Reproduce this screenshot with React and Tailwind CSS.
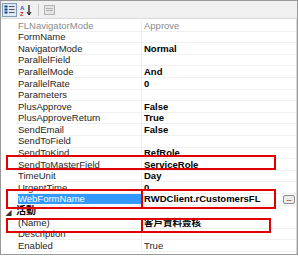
import React from "react";

const rows = [
  { name: "FLNavigatorMode", value: "Approve", readOnly: true },
  { name: "FormName", value: "" },
  { name: "NavigatorMode", value: "Normal", bold: true },
  { name: "ParallelField", value: "" },
  { name: "ParallelMode", value: "And", bold: true },
  { name: "ParallelRate", value: "0", bold: true },
  { name: "Parameters", value: "" },
  { name: "PlusApprove", value: "False", bold: true },
  { name: "PlusApproveReturn", value: "True", bold: true },
  { name: "SendEmail", value: "False", bold: true },
  { name: "SendToField", value: "" },
  { name: "SendToKind", value: "RefRole", bold: true },
  { name: "SendToMasterField", value: "ServiceRole", bold: true },
  { name: "TimeUnit", value: "Day", bold: true },
  { name: "UrgentTime", value: "0", bold: true },
  { name: "WebFormName", value: "RWDClient.rCustomersFL", bold: true, selected: true },
  { category: "活動" },
  { name: "(Name)", value: "客戶資料簽核", bold: true },
  { name: "Description", value: "" },
  { name: "Enabled", value: "True" },
];

const PropertyRow = ({ row }) => {
  if (row.category) {
    return (
      <div className="flex h-[11.6px] items-center">
        <div className="w-[15px] flex items-center justify-center pt-[3px]">
          <span className="text-[6px] leading-none text-[#333]">◢</span>
        </div>
        <span className="font-bold text-[10px] leading-none text-black">{row.category}</span>
      </div>
    );
  }
  return (
    <div className="flex h-[11.6px]">
      <div className="w-[15px] shrink-0" />
      <div className="w-[126px] shrink-0 border-b border-r border-[#f0f0f0] flex items-center pl-[2px] overflow-hidden">
        <span
          className={
            row.selected
              ? "bg-[#3399ff] text-white w-full h-[10px] flex items-center"
              : row.readOnly
              ? "text-[#8a8a8a]"
              : "text-[#262626]"
          }
        >
          {row.name}
        </span>
      </div>
      <div className="flex-1 border-b border-[#f0f0f0] flex items-center pl-[2px] overflow-hidden">
        <span
          className={
            row.readOnly
              ? "text-[#8a8a8a]"
              : row.bold
              ? "font-bold text-black"
              : "text-[#262626]"
          }
        >
          {row.value}
        </span>
        {row.selected && (
          <div className="ml-auto mr-[1px] w-[12px] h-[9px] rounded-[2px] border border-[#8c8c8c] bg-[#ececec] flex items-end justify-center pb-[1px]">
            <span className="text-[6px] leading-none text-black font-bold">...</span>
          </div>
        )}
      </div>
    </div>
  );
};

export default function App() {
  return (
    <div
      className="w-[298px] h-[258px] bg-white relative"
      style={{ fontFamily: '"Liberation Sans", "Noto Sans CJK TC", Arial, sans-serif' }}
    >
      <div className="h-[255px] border border-[#9a9a9a] flex flex-col overflow-hidden">
        {/* Toolbar */}
        <div className="h-[18px] shrink-0 bg-[#f0f0f0] border-b border-[#d9d9d9] flex items-center pl-[1px] gap-[2px]">
          <div className="w-[15px] h-[14px] border border-[#7f9db9] bg-[#dce8f5] flex items-center justify-center">
            <svg width="11" height="10" viewBox="0 0 11 10">
              <rect x="0.5" y="0.5" width="3" height="2" fill="#1f3f8f" />
              <rect x="0.5" y="3.5" width="3" height="2" fill="#1f3f8f" />
              <rect x="0.5" y="6.5" width="3" height="2" fill="#1f3f8f" />
              <rect x="5" y="1" width="5.5" height="1" fill="#555" />
              <rect x="5" y="4" width="5.5" height="1" fill="#555" />
              <rect x="5" y="7" width="5.5" height="1" fill="#555" />
            </svg>
          </div>
          <div className="w-[14px] h-[14px] flex items-center justify-center">
            <svg width="12" height="12" viewBox="0 0 12 12">
              <text x="0" y="5.5" fontSize="6" fontWeight="bold" fill="#2a5cc8" fontFamily="Liberation Sans">A</text>
              <text x="0" y="11.5" fontSize="6" fontWeight="bold" fill="#d02020" fontFamily="Liberation Sans">Z</text>
              <path d="M9 1 V10" stroke="#111" strokeWidth="1.2" />
              <path d="M7 8 L9 11 L11 8" stroke="#111" strokeWidth="1" fill="none" />
            </svg>
          </div>
          <div className="w-[1px] h-[12px] bg-[#c8c8c8] ml-[3px] mr-[2px]" />
          <div className="w-[12px] h-[12px] flex items-center justify-center">
            <svg width="11" height="10" viewBox="0 0 11 10">
              <rect x="0.5" y="0.5" width="10" height="9" fill="#e4e4e4" stroke="#b4b4b4" />
              <rect x="2" y="3" width="7" height="1" fill="#b4b4b4" />
              <rect x="2" y="5" width="7" height="1" fill="#b4b4b4" />
            </svg>
          </div>
        </div>

        {/* Grid */}
        <div className="flex-1 text-[9.5px] leading-none border-r border-[#d9d9d9] pt-[1px]">
          {rows.map((row, i) => (
            <PropertyRow key={i} row={row} />
          ))}
        </div>
      </div>

      {/* Red highlight annotations */}
      <div className="absolute left-[6px] top-[155px] w-[270px] h-[15px] border-2 border-[#e00000]" />
      <div className="absolute left-[6px] top-[189px] w-[137px] h-[20px] border-2 border-[#e00000]" />
      <div className="absolute left-[141px] top-[189px] w-[135px] h-[20px] border-2 border-[#e00000]" />
      <div className="absolute left-[6px] top-[218px] w-[137px] h-[15px] border-2 border-[#e00000]" />
      <div className="absolute left-[141px] top-[218px] w-[130px] h-[15px] border-2 border-[#e00000]" />
    </div>
  );
}
